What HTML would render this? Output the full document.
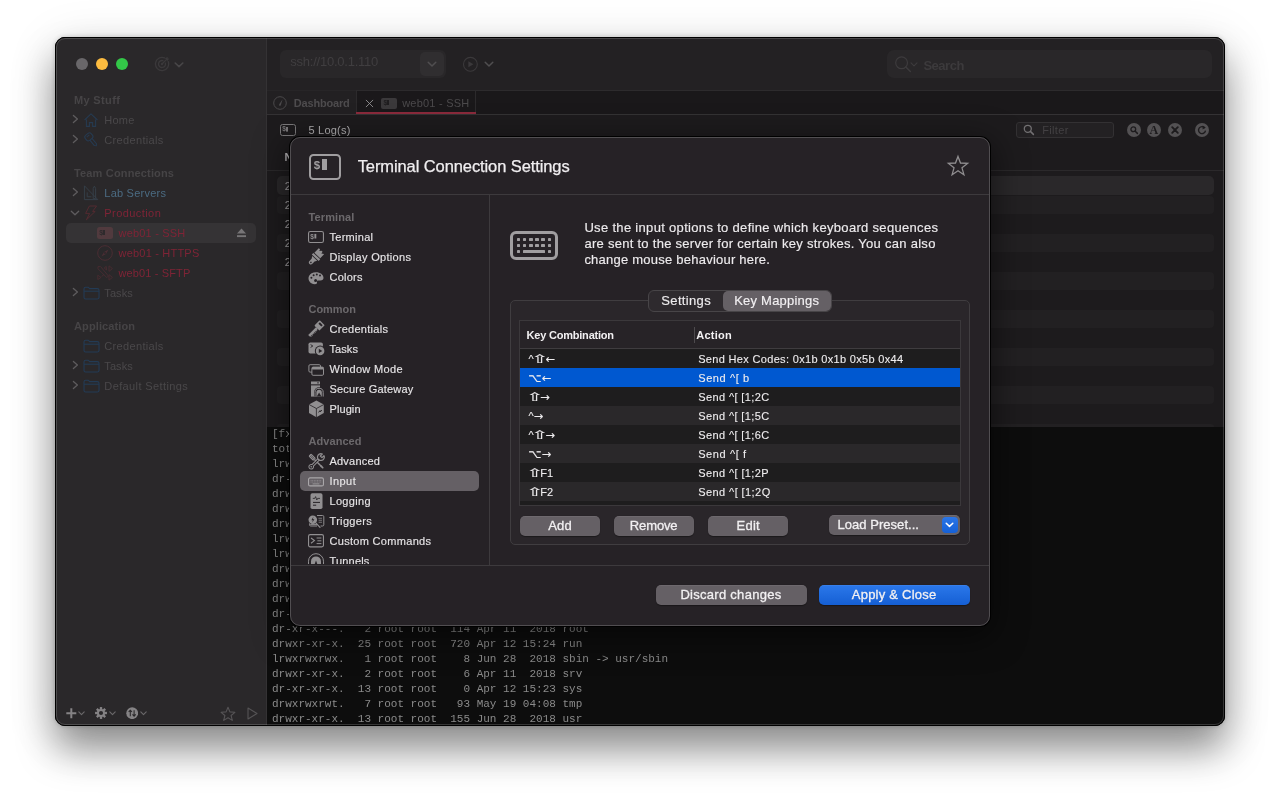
<!DOCTYPE html>
<html lang="en">
<head>
<meta charset="utf-8">
<title>Terminal Connection Settings</title>
<style>
html,body{margin:0;padding:0;}
body{width:1280px;height:800px;background:#fff;position:relative;overflow:hidden;font-family:"Liberation Sans",sans-serif;-webkit-font-smoothing:antialiased;}
.abs{position:absolute;}
#shadow{position:absolute;left:55px;top:37px;width:1170px;height:689px;border-radius:11px;box-shadow:0 24px 38px 0 rgba(0,0,0,.40),0 0 5px rgba(0,0,0,.2),0 8px 50px rgba(0,0,0,.13);background:#000;}
#win{will-change:transform;position:absolute;left:0;top:0;width:1280px;height:800px;clip-path:inset(37px 55px 74px 55px round 10px);background:#000;}
#edge{position:absolute;left:55px;top:37px;width:1168px;height:687px;border:1px solid #000;border-radius:10px;pointer-events:none;}
#edge2{position:absolute;left:56px;top:38px;width:1166px;height:685px;border:1px solid rgba(255,255,255,.17);border-radius:9px;pointer-events:none;}
.t{position:absolute;white-space:nowrap;line-height:1;}
/* main sidebar */
#sb{left:56px;top:38px;width:211px;height:688px;background:#2a282a;}
.sh{font-size:11px;font-weight:bold;color:#464446;letter-spacing:.1px;}
.si{font-size:12px;color:#474547;letter-spacing:.15px;}
.red{color:#7b2533;}
.blu{color:#4b6b84;}
/* dialog */
#dlg{left:290px;top:137px;width:700px;height:489px;border-radius:10px;background:#252125;box-shadow:0 0 0 1px #000,0 8px 32px 3px rgba(0,0,0,.5);}
#dlgedge{left:290px;top:137px;width:698px;height:487px;border-radius:10px;border:1px solid rgba(255,255,255,.2);pointer-events:none;}
.dh{font-size:11px;font-weight:bold;color:#6d696d;letter-spacing:.1px;}
.di{font-size:12px;color:#e9e7e9;letter-spacing:.1px;}
.btn{position:absolute;height:20px;border-radius:5px;background:#656065;color:#f2f0f2;font-size:13px;text-align:center;line-height:20px;box-shadow:0 0.5px 1px rgba(0,0,0,.4);}
.row{position:absolute;left:520px;width:440px;height:19px;}
.rt{position:absolute;font-size:11px;color:#f0eef0;white-space:nowrap;line-height:1;letter-spacing:.2px;}
.term{position:absolute;left:272px;font-family:"Liberation Mono","DejaVu Sans Mono",monospace;font-size:11px;color:#8b8b8b;white-space:pre;line-height:15px;}
.sym{font-family:"DejaVu Sans",sans-serif;font-size:11.5px;line-height:0;}
.shf{display:inline-block;transform:scaleX(1.8);line-height:1;margin:0 1px;}
</style>
</head>
<body>
<div id="shadow"></div>
<div id="win">
<div class="abs" style="left:56px;top:38px;width:210px;height:688px;background:#2a282a;"></div>
<div class="abs" style="left:266px;top:38px;width:1px;height:688px;background:#343234;"></div>
<div class="abs" style="left:267px;top:38px;width:958px;height:52px;background:#232123;"></div>
<div class="abs" style="left:267px;top:90px;width:958px;height:24px;background:#1a181a;"></div>
<div class="abs" style="left:267px;top:90px;width:958px;height:1px;background:#2d2b2d;"></div>
<div class="abs" style="left:267px;top:114px;width:958px;height:1px;background:#343234;"></div>
<div class="abs" style="left:267px;top:115px;width:958px;height:312px;background:#1d1b1d;"></div>
<div class="abs" style="left:267px;top:170px;width:958px;height:1px;background:#2b292b;"></div>
<div class="abs" style="left:267px;top:427px;width:958px;height:299px;background:#0d0d0d;"></div>

<!-- p10_sidebar -->
<div class="abs" style="left:76px;top:58px;width:12px;height:12px;background:#69676a;border-radius:50%;"></div>
<div class="abs" style="left:96px;top:58px;width:12px;height:12px;background:#fdbc40;border-radius:50%;"></div>
<div class="abs" style="left:116px;top:58px;width:12px;height:12px;background:#33c748;border-radius:50%;"></div>
<svg class="abs" style="left:154px;top:56px;" width="16" height="16" viewBox="0 0 16 16" fill="none"><path d="M10.6 1.9 A6.6 6.6 0 1 0 14.2 5.6" stroke="#3b393b" stroke-width="1.3" stroke-linecap="round"/><path d="M8.9 4.6 A3.5 3.5 0 1 0 11.4 7.1" stroke="#3b393b" stroke-width="1.3" stroke-linecap="round"/><circle cx="8" cy="8" r="1.2" fill="#3b393b"/><path d="M8 8 L12.4 3.6" stroke="#3b393b" stroke-width="1.3"/><path d="M11 2.6 L13.6 0.8 L13.7 2.4 L15.2 2.5 L13.4 5 Z" fill="#3b393b"/></svg>
<svg class="abs" style="left:174px;top:61.6px;" width="10" height="6.5" viewBox="0 0 10 6.5" fill="none"><path d="M1.2 1 L5 4.6 L8.8 1" stroke="#484648" stroke-width="1.6" stroke-linecap="round" stroke-linejoin="round"/></svg>
<div class="t" style="left:74px;top:94.5px;font-size:11px;color:#464446;font-weight:bold;letter-spacing:0.345px;">My Stuff</div>
<svg class="abs" style="left:72px;top:114.3px;" width="7" height="10" viewBox="0 0 7 10" fill="none"><path d="M1.4 1.5 L5.4 5 L1.4 8.5" stroke="#5e5c5e" stroke-width="1.3" stroke-linecap="round" stroke-linejoin="round"/></svg>
<svg class="abs" style="left:83px;top:112px;" width="16" height="16" viewBox="0 0 16 16" fill="none"><path d="M1.6 8 L8 1.8 L14.4 8" stroke="#263a50" stroke-width="1.1" stroke-linejoin="round"/><path d="M3.4 7.4 V14.4 H6.4 V10.6 H9.6 V14.4 H12.6 V7.4" stroke="#263a50" stroke-width="1.1"/></svg>
<div class="t" style="left:104.3px;top:114.5px;font-size:11px;color:#4a484a;letter-spacing:0.219px;">Home</div>
<svg class="abs" style="left:72px;top:134.3px;" width="7" height="10" viewBox="0 0 7 10" fill="none"><path d="M1.4 1.5 L5.4 5 L1.4 8.5" stroke="#5e5c5e" stroke-width="1.3" stroke-linecap="round" stroke-linejoin="round"/></svg>
<svg class="abs" style="left:83px;top:131px;" width="16" height="16" viewBox="0 0 16 16" fill="none"><g transform="rotate(-40 6 6)"><rect x="2.2" y="2.6" width="7.6" height="6.4" rx="2.2" stroke="#263a50" stroke-width="1.1"/><path d="M4.2 4.6 H7.6" stroke="#263a50" stroke-width="1"/><path d="M4.6 9 V16 L6 17.4 L7.4 16 V9" stroke="#263a50" stroke-width="1.1" stroke-linejoin="round"/></g></svg>
<div class="t" style="left:104.3px;top:134.5px;font-size:11px;color:#4a484a;letter-spacing:0.336px;">Credentials</div>
<div class="t" style="left:74px;top:167.5px;font-size:11px;color:#464446;font-weight:bold;letter-spacing:0.160px;">Team Connections</div>
<svg class="abs" style="left:72px;top:187.3px;" width="7" height="10" viewBox="0 0 7 10" fill="none"><path d="M1.4 1.5 L5.4 5 L1.4 8.5" stroke="#5e5c5e" stroke-width="1.3" stroke-linecap="round" stroke-linejoin="round"/></svg>
<svg class="abs" style="left:83px;top:185px;" width="16" height="16" viewBox="0 0 16 16" fill="none"><path d="M1.4 0.8 V14.6 H14.8 Z" stroke="#353f48" stroke-width="1"/><path d="M4.2 7.4 V11.8 H8.4" stroke="#353f48" stroke-width="1"/><path d="M10.2 3.4 L11.4 1.2 L12.6 3.4 V13.6 H10.2 Z" stroke="#353f48" stroke-width="1"/></svg>
<div class="t" style="left:104.3px;top:187.5px;font-size:11px;color:#4b6b82;letter-spacing:0.229px;">Lab Servers</div>
<svg class="abs" style="left:70px;top:210.3px;" width="10" height="6" viewBox="0 0 10 6" fill="none"><path d="M1.3 1.2 L5 4.8 L8.7 1.2" stroke="#5e5c5e" stroke-width="1.3" stroke-linecap="round" stroke-linejoin="round"/></svg>
<svg class="abs" style="left:84px;top:205px;" width="14" height="16" viewBox="0 0 14 16" fill="none"><path d="M5.4 1 H12.6 L8.6 6.4 H11.2 L2.4 14.8 L5.6 8.4 H1.6 Z" stroke="#532a30" stroke-width="1" stroke-linejoin="round"/></svg>
<div class="t" style="left:104.3px;top:207.5px;font-size:11px;color:#7f2436;letter-spacing:0.434px;">Production</div>
<div class="abs" style="left:66px;top:223px;width:190px;height:20px;background:#353335;border-radius:5px;"></div>
<div class="abs" style="left:97px;top:227px;width:16px;height:12px;background:#513a3e;border-radius:2.5px;"></div>
<div class="t" style="left:99.3px;top:229.3px;font-size:7px;font-weight:bold;color:#2e2a2c;letter-spacing:-.2px;">$</div><div class="abs" style="left:103.3px;top:229.5px;width:2.2px;height:5.5px;background:#2e2a2c;"></div>
<div class="t" style="left:118.5px;top:227.5px;font-size:11px;color:#7f2436;letter-spacing:0.194px;">web01 - SSH</div>
<svg class="abs" style="left:236px;top:228px;" width="11" height="10" viewBox="0 0 11 10" fill="none"><path d="M5.5 0.6 L10 5.6 H1 Z" fill="#777577"/><rect x="1" y="7.2" width="9" height="1.9" fill="#777577"/></svg>
<svg class="abs" style="left:97px;top:245px;" width="16" height="16" viewBox="0 0 16 16" fill="none"><circle cx="8" cy="8" r="7.3" stroke="#4a2d33" stroke-width="1"/><path d="M11.6 4.4 L9 9 L4.4 11.6 L7 7 Z" fill="#4a2d33"/><circle cx="8" cy="8" r="0.9" fill="#2a282a"/></svg>
<div class="t" style="left:118.5px;top:247.5px;font-size:11px;color:#7f2436;letter-spacing:0.208px;">web01 - HTTPS</div>
<svg class="abs" style="left:97px;top:265px;" width="16" height="16" viewBox="0 0 16 16" fill="none"><path d="M1 1.6 L3.6 1.6 L11.4 11 L9.8 12.6 L1 3.8 Z" stroke="#4a2b31" stroke-width="0.9" stroke-linejoin="round"/><path d="M9.2 1.4 L7.2 3 L9.6 5 Z" stroke="#4a2b31" stroke-width="0.9" stroke-linejoin="round"/><path d="M12 0.8 L15.4 3.6 L12 6.4 Z" stroke="#4a2b31" stroke-width="0.9" stroke-linejoin="round"/><path d="M12 9.6 L15.4 12.4 L12 15.2 Z" stroke="#4a2b31" stroke-width="0.9" stroke-linejoin="round"/><path d="M0.8 10.2 L4 12.4 L0.8 14.6 Z" stroke="#4a2b31" stroke-width="0.9" stroke-linejoin="round"/><path d="M4.6 11.6 L7 9.4" stroke="#4a2b31" stroke-width="0.9"/></svg>
<div class="t" style="left:118.5px;top:267.5px;font-size:11px;color:#7f2436;letter-spacing:0.131px;">web01 - SFTP</div>
<svg class="abs" style="left:72px;top:287.3px;" width="7" height="10" viewBox="0 0 7 10" fill="none"><path d="M1.4 1.5 L5.4 5 L1.4 8.5" stroke="#5e5c5e" stroke-width="1.3" stroke-linecap="round" stroke-linejoin="round"/></svg>
<svg class="abs" style="left:82.6px;top:286px;" width="17" height="14" viewBox="0 0 17 14" fill="none"><path d="M1 3 Q1 1.2 2.6 1.2 H5.2 L6.6 2.6 H14.4 Q16 2.6 16 4.2 V11.4 Q16 13 14.4 13 H2.6 Q1 13 1 11.4 Z" stroke="#233b55" stroke-width="1.1"/><path d="M1 5.2 H16" stroke="#233b55" stroke-width="1.1"/></svg>
<div class="t" style="left:104.3px;top:287.5px;font-size:11px;color:#4a484a;letter-spacing:0.095px;">Tasks</div>
<div class="t" style="left:74px;top:320.5px;font-size:11px;color:#464446;font-weight:bold;letter-spacing:0.111px;">Application</div>
<svg class="abs" style="left:82.6px;top:339px;" width="17" height="14" viewBox="0 0 17 14" fill="none"><path d="M1 3 Q1 1.2 2.6 1.2 H5.2 L6.6 2.6 H14.4 Q16 2.6 16 4.2 V11.4 Q16 13 14.4 13 H2.6 Q1 13 1 11.4 Z" stroke="#233b55" stroke-width="1.1"/><path d="M1 5.2 H16" stroke="#233b55" stroke-width="1.1"/></svg>
<div class="t" style="left:104.3px;top:340.5px;font-size:11px;color:#4a484a;letter-spacing:0.336px;">Credentials</div>
<svg class="abs" style="left:72px;top:360.3px;" width="7" height="10" viewBox="0 0 7 10" fill="none"><path d="M1.4 1.5 L5.4 5 L1.4 8.5" stroke="#5e5c5e" stroke-width="1.3" stroke-linecap="round" stroke-linejoin="round"/></svg>
<svg class="abs" style="left:82.6px;top:359px;" width="17" height="14" viewBox="0 0 17 14" fill="none"><path d="M1 3 Q1 1.2 2.6 1.2 H5.2 L6.6 2.6 H14.4 Q16 2.6 16 4.2 V11.4 Q16 13 14.4 13 H2.6 Q1 13 1 11.4 Z" stroke="#233b55" stroke-width="1.1"/><path d="M1 5.2 H16" stroke="#233b55" stroke-width="1.1"/></svg>
<div class="t" style="left:104.3px;top:360.5px;font-size:11px;color:#4a484a;letter-spacing:0.095px;">Tasks</div>
<svg class="abs" style="left:72px;top:380.3px;" width="7" height="10" viewBox="0 0 7 10" fill="none"><path d="M1.4 1.5 L5.4 5 L1.4 8.5" stroke="#5e5c5e" stroke-width="1.3" stroke-linecap="round" stroke-linejoin="round"/></svg>
<svg class="abs" style="left:82.6px;top:379px;" width="17" height="14" viewBox="0 0 17 14" fill="none"><path d="M1 3 Q1 1.2 2.6 1.2 H5.2 L6.6 2.6 H14.4 Q16 2.6 16 4.2 V11.4 Q16 13 14.4 13 H2.6 Q1 13 1 11.4 Z" stroke="#233b55" stroke-width="1.1"/><path d="M1 5.2 H16" stroke="#233b55" stroke-width="1.1"/></svg>
<div class="t" style="left:104.3px;top:380.5px;font-size:11px;color:#4a484a;letter-spacing:0.389px;">Default Settings</div>
<svg class="abs" style="left:66px;top:707.7px;" width="11" height="11" viewBox="0 0 11 11" fill="none"><path d="M5.3 0.3 V10.3 M0.3 5.3 H10.3" stroke="#858385" stroke-width="2"/></svg>
<svg class="abs" style="left:78px;top:711.3px;" width="7" height="5" viewBox="0 0 7 5" fill="none"><path d="M0.8 0.8 L3.5 3.6 L6.2 0.8" stroke="#6a686a" stroke-width="1.1" stroke-linecap="round" stroke-linejoin="round"/></svg>
<svg class="abs" style="left:94px;top:706.2px;" width="14" height="14" viewBox="0 0 14 14" fill="none"><g transform="translate(7 7) scale(.9)"><circle r="3.4" stroke="#858385" stroke-width="2.2"/><rect x="-1.3" y="-6.6" width="2.6" height="3" fill="#858385" transform="rotate(0)"/><rect x="-1.3" y="-6.6" width="2.6" height="3" fill="#858385" transform="rotate(45)"/><rect x="-1.3" y="-6.6" width="2.6" height="3" fill="#858385" transform="rotate(90)"/><rect x="-1.3" y="-6.6" width="2.6" height="3" fill="#858385" transform="rotate(135)"/><rect x="-1.3" y="-6.6" width="2.6" height="3" fill="#858385" transform="rotate(180)"/><rect x="-1.3" y="-6.6" width="2.6" height="3" fill="#858385" transform="rotate(225)"/><rect x="-1.3" y="-6.6" width="2.6" height="3" fill="#858385" transform="rotate(270)"/><rect x="-1.3" y="-6.6" width="2.6" height="3" fill="#858385" transform="rotate(315)"/></g></svg>
<svg class="abs" style="left:109.3px;top:711.3px;" width="7" height="5" viewBox="0 0 7 5" fill="none"><path d="M0.8 0.8 L3.5 3.6 L6.2 0.8" stroke="#6a686a" stroke-width="1.1" stroke-linecap="round" stroke-linejoin="round"/></svg>
<svg class="abs" style="left:125.6px;top:706.6px;" width="12.4" height="12.4" viewBox="0 0 13 13" fill="none"><circle cx="6.5" cy="6.5" r="6.2" fill="#858385"/><path d="M4.5 9.6 V3.6 M2.8 5.2 L4.5 3.4 L6.2 5.2 M8.5 3.4 V9.4 M6.8 7.8 L8.5 9.6 L10.2 7.8" stroke="#2a282a" stroke-width="1.1" fill="none"/></svg>
<svg class="abs" style="left:140.2px;top:711.3px;" width="7" height="5" viewBox="0 0 7 5" fill="none"><path d="M0.8 0.8 L3.5 3.6 L6.2 0.8" stroke="#6a686a" stroke-width="1.1" stroke-linecap="round" stroke-linejoin="round"/></svg>
<svg class="abs" style="left:220px;top:705.5px;" width="16" height="16" viewBox="0 0 16 16" fill="none"><path d="M8 1.2 L9.9 5.9 L14.9 6.3 L11.1 9.5 L12.3 14.4 L8 11.7 L3.7 14.4 L4.9 9.5 L1.1 6.3 L6.1 5.9 Z" stroke="#555355" stroke-width="1.1" stroke-linejoin="round"/></svg>
<svg class="abs" style="left:247px;top:707px;" width="11" height="13" viewBox="0 0 11 13" fill="none"><path d="M1 1 L10 6.5 L1 12 Z" stroke="#555355" stroke-width="1.1" stroke-linejoin="round"/></svg>
<!-- p20_toolbar -->
<div class="abs" style="left:280px;top:50px;width:166px;height:28px;background:#292729;border-radius:6px;"></div>
<div class="t" style="left:290.3px;top:54.5px;font-size:13px;color:#403e40;letter-spacing:-0.237px;">ssh://10.0.1.110</div>
<div class="abs" style="left:420px;top:52px;width:23.5px;height:23.5px;background:#302e30;border-radius:5px;"></div>
<svg class="abs" style="left:427px;top:61px;" width="10" height="7" viewBox="0 0 10 7" fill="none"><path d="M1.2 1.2 L5 5 L8.8 1.2" stroke="#504e50" stroke-width="1.5" stroke-linecap="round" stroke-linejoin="round"/></svg>
<svg class="abs" style="left:462px;top:55.5px;" width="17" height="17" viewBox="0 0 17 17" fill="none"><circle cx="8.4" cy="8.3" r="6.9" stroke="#3b393b" stroke-width="1.1"/><path d="M6.4 5.3 L11.4 8.3 L6.4 11.3 Z" fill="#3b393b"/></svg>
<svg class="abs" style="left:484px;top:61px;" width="10" height="7" viewBox="0 0 10 7" fill="none"><path d="M1.2 1.2 L5 5 L8.8 1.2" stroke="#504e50" stroke-width="1.5" stroke-linecap="round" stroke-linejoin="round"/></svg>
<div class="abs" style="left:887px;top:50px;width:325px;height:28px;background:#292729;border-radius:7px;"></div>
<svg class="abs" style="left:894px;top:55px;" width="26" height="18" viewBox="0 0 26 18" fill="none"><circle cx="7.6" cy="7.8" r="5.9" stroke="#3d3b3d" stroke-width="1.2"/><path d="M11.8 12 L16.4 16.6" stroke="#3d3b3d" stroke-width="1.4" stroke-linecap="round"/><path d="M17 7.8 L20 10.8 L23 7.8" stroke="#3d3b3d" stroke-width="1.1" stroke-linecap="round" stroke-linejoin="round"/></svg>
<div class="t" style="left:923.4px;top:58.8px;font-size:13px;color:#3c3a3c;font-weight:bold;letter-spacing:-0.473px;">Search</div>
<div class="abs" style="left:267px;top:90px;width:89px;height:24px;background:#222022;border-top:1px solid #272527;box-sizing:border-box;"></div>
<svg class="abs" style="left:273px;top:96px;" width="14" height="14" viewBox="0 0 14 14" fill="none"><circle cx="7" cy="7" r="6.3" stroke="#4b494b" stroke-width="1"/><path d="M9.6 3.2 L6.2 8.2 Q5.6 9.4 6.6 9.8 Q7.6 10 7.9 8.9 Z" fill="#4b494b"/></svg>
<div class="t" style="left:293.8px;top:97.7px;font-size:11px;color:#4e4c4e;font-weight:bold;letter-spacing:-0.195px;">Dashboard</div>
<div class="abs" style="left:356px;top:90px;width:120px;height:24px;background:#1a181a;border:1px solid #2c2a2c;border-bottom:none;box-sizing:border-box;"></div>
<div class="abs" style="left:356px;top:112.3px;width:120px;height:2.1px;background:#8a2a3b;"></div>
<svg class="abs" style="left:365px;top:99px;" width="9" height="9" viewBox="0 0 9 9" fill="none"><path d="M1.2 1.2 L7.8 7.8 M7.8 1.2 L1.2 7.8" stroke="#9a989a" stroke-width="0.85" stroke-linecap="round"/></svg>
<div class="abs" style="left:381px;top:97.5px;width:16px;height:11px;background:#3b393b;border-radius:2px;"></div>
<div class="t" style="left:383.4px;top:99.3px;font-size:7px;font-weight:bold;color:#1f1d1f;letter-spacing:-.2px;">$</div><div class="abs" style="left:387.2px;top:99.6px;width:2.2px;height:5.2px;background:#1f1d1f;"></div>
<div class="t" style="left:402.2px;top:97.7px;font-size:11px;color:#4c4a4c;letter-spacing:0.219px;">web01 - SSH</div>
<svg class="abs" style="left:280px;top:123.5px;" width="16" height="12" viewBox="0 0 16 12" fill="none"><rect x="0.5" y="0.5" width="15" height="11" rx="2" stroke="#7a787a" stroke-width="1"/><rect x="6" y="3" width="2" height="4.6" fill="#7a787a"/></svg>
<div class="t" style="left:282.3px;top:126.4px;font-size:6.5px;font-weight:bold;color:#7a787a;">$</div><div class="t" style="left:308.4px;top:124.7px;font-size:11px;color:#b2b0b2;letter-spacing:0.235px;">5 Log(s)</div>
<div class="abs" style="left:1016px;top:122px;width:98px;height:16px;background:#232123;border:1px solid #333133;box-sizing:border-box;border-radius:3px;"></div>
<svg class="abs" style="left:1023px;top:124px;" width="12" height="12" viewBox="0 0 12 12" fill="none"><circle cx="4.8" cy="4.8" r="3.5" stroke="#727072" stroke-width="1.3"/><path d="M7.4 7.4 L10.4 10.4" stroke="#727072" stroke-width="1.5" stroke-linecap="round"/></svg>
<div class="t" style="left:1042.3px;top:124.5px;font-size:11px;color:#434143;letter-spacing:0.311px;">Filter</div>
<div class="abs" style="left:1126.7px;top:123px;width:14px;height:14px;background:#535153;border-radius:50%;"></div>
<div class="abs" style="left:1147px;top:123px;width:14px;height:14px;background:#535153;border-radius:50%;"></div>
<div class="abs" style="left:1168px;top:123px;width:14px;height:14px;background:#535153;border-radius:50%;"></div>
<div class="abs" style="left:1195px;top:123px;width:14px;height:14px;background:#535153;border-radius:50%;"></div>
<svg class="abs" style="left:1126.7px;top:123px;" width="14" height="14" viewBox="0 0 14 14" fill="none"><circle cx="6.3" cy="6.3" r="2.4" stroke="#1d1b1d" stroke-width="1.3"/><path d="M8.2 8.2 L10.4 10.4" stroke="#1d1b1d" stroke-width="1.5" stroke-linecap="round"/></svg>
<div class="t" style="left:1149.6px;top:124px;font-size:12px;font-weight:bold;color:#1d1b1d;font-family:'Liberation Serif',serif;">A</div><svg class="abs" style="left:1168px;top:123px;" width="14" height="14" viewBox="0 0 14 14" fill="none"><path d="M4.2 4.2 L9.8 9.8 M9.8 4.2 L4.2 9.8" stroke="#1d1b1d" stroke-width="1.9" stroke-linecap="round"/></svg>
<svg class="abs" style="left:1195px;top:123px;" width="14" height="14" viewBox="0 0 14 14" fill="none"><path d="M9.9 5.1 A3.5 3.5 0 1 0 10.5 7.6" stroke="#1d1b1d" stroke-width="1.4"/><path d="M7.6 2.4 L10.6 4.6 L7.6 6.6 Z" fill="#1d1b1d"/></svg>
<div class="t" style="left:284.6px;top:151.8px;font-size:11px;color:#b3b1b3;font-weight:bold;">N</div>
<div class="abs" style="left:277px;top:176px;width:937px;height:19px;background:#2a282a;border-radius:5px;"></div>
<div class="abs" style="left:277px;top:196px;width:937px;height:18px;background:#222022;border-radius:4px;"></div>
<div class="abs" style="left:277px;top:234px;width:937px;height:18px;background:#222022;border-radius:4px;"></div>
<div class="abs" style="left:277px;top:272px;width:937px;height:18px;background:#222022;border-radius:4px;"></div>
<div class="abs" style="left:277px;top:310px;width:937px;height:18px;background:#222022;border-radius:4px;"></div>
<div class="abs" style="left:277px;top:348px;width:937px;height:18px;background:#222022;border-radius:4px;"></div>
<div class="abs" style="left:277px;top:386px;width:937px;height:18px;background:#222022;border-radius:4px;"></div>
<div class="abs" style="left:277px;top:424px;width:937px;height:3px;background:#222022;border-radius:4px 4px 0 0;"></div>
<div class="t" style="left:284.8px;top:181.3px;font-size:11px;color:#a5a3a5;">2</div>
<div class="t" style="left:284.8px;top:200.3px;font-size:11px;color:#a5a3a5;">2</div>
<div class="t" style="left:284.8px;top:219.3px;font-size:11px;color:#a5a3a5;">2</div>
<div class="t" style="left:284.8px;top:238.3px;font-size:11px;color:#a5a3a5;">2</div>
<div class="t" style="left:284.8px;top:257.3px;font-size:11px;color:#a5a3a5;">2</div>
<!-- p30_term -->
<div class="term" style="top:427px;">[fxadmin@web01 /]$ ls -l
total 16
lrwxrwxrwx.   1 root root    7 Jun 28  2018 bin -&gt; usr/bin
dr-xr-xr-x.   5 root root 4096 Jun 28  2018 boot
drwxr-xr-x.  20 root root 3160 Apr 12 15:23 dev
drwxr-xr-x.  80 root root 8192 Apr 12 15:24 etc
drwxr-xr-x.   3 root root   21 Jun 28  2018 home
lrwxrwxrwx.   1 root root    7 Jun 28  2018 lib -&gt; usr/lib
lrwxrwxrwx.   1 root root    9 Jun 28  2018 lib64 -&gt; usr/lib64
drwxr-xr-x.   2 root root    6 Apr 11  2018 media
drwxr-xr-x.   2 root root    6 Apr 11  2018 mnt
drwxr-xr-x.   2 root root    6 Apr 11  2018 opt
dr-xr-xr-x. 101 root root    0 Apr 12 15:23 proc
dr-xr-x---.   2 root root  114 Apr 11  2018 root
drwxr-xr-x.  25 root root  720 Apr 12 15:24 run
lrwxrwxrwx.   1 root root    8 Jun 28  2018 sbin -&gt; usr/sbin
drwxr-xr-x.   2 root root    6 Apr 11  2018 srv
dr-xr-xr-x.  13 root root    0 Apr 12 15:23 sys
drwxrwxrwt.   7 root root   93 May 19 04:08 tmp
drwxr-xr-x.  13 root root  155 Jun 28  2018 usr</div>
<!-- p40_dialog -->
<div class="abs" id="dlg" style="background:#262226"></div>
<div class="abs" style="left:291px;top:194px;width:698px;height:1px;background:#3d3a3d;"></div>
<div class="abs" style="left:489px;top:195px;width:1px;height:370px;background:#3d3a3d;"></div>
<div class="abs" style="left:291px;top:564.5px;width:698px;height:1px;background:#3d3a3d;"></div>
<div class="abs" style="left:309px;top:154px;width:32px;height:25.5px;background:transparent;border:2.3px solid #a09ea0;border-radius:4.5px;box-sizing:border-box;"></div>
<div class="t" style="left:313.8px;top:159.6px;font-size:11.5px;font-weight:bold;color:#a09ea0;">$</div><div class="abs" style="left:322.2px;top:159.4px;width:4.7px;height:10.6px;background:#a09ea0;"></div>
<div class="t" style="left:357.7px;top:157.65px;font-size:16.5px;color:#f0eef0;letter-spacing:-0.097px;-webkit-text-stroke:.25px #f0eef0;">Terminal Connection Settings</div>
<svg class="abs" style="left:946px;top:154px;" width="24" height="24" viewBox="0 0 24 24" fill="none"><path d="M12 2.4 L14.5 9 L21.6 9.4 L16 13.8 L17.9 20.7 L12 16.8 L6.1 20.7 L8 13.8 L2.4 9.4 L9.5 9 Z" stroke="#908e90" stroke-width="1.3" stroke-linejoin="miter"/></svg>
<div class="t" style="left:308.5px;top:212.1px;font-size:11px;color:#6c696c;font-weight:bold;letter-spacing:0.109px;">Terminal</div>
<div class="t" style="left:329.5px;top:231.5px;font-size:11px;color:#e6e4e6;letter-spacing:0.276px;-webkit-text-stroke:.15px #e6e4e6;">Terminal</div>
<div class="t" style="left:329.5px;top:251.5px;font-size:11px;color:#e6e4e6;letter-spacing:0.319px;-webkit-text-stroke:.15px #e6e4e6;">Display Options</div>
<div class="t" style="left:329.5px;top:271.5px;font-size:11px;color:#e6e4e6;letter-spacing:0.242px;-webkit-text-stroke:.15px #e6e4e6;">Colors</div>
<div class="t" style="left:308.5px;top:304.1px;font-size:11px;color:#6c696c;font-weight:bold;letter-spacing:-0.033px;">Common</div>
<div class="t" style="left:329.5px;top:323.5px;font-size:11px;color:#e6e4e6;letter-spacing:0.276px;-webkit-text-stroke:.15px #e6e4e6;">Credentials</div>
<div class="t" style="left:329.5px;top:343.5px;font-size:11px;color:#e6e4e6;letter-spacing:0.070px;-webkit-text-stroke:.15px #e6e4e6;">Tasks</div>
<div class="t" style="left:329.5px;top:363.5px;font-size:11px;color:#e6e4e6;letter-spacing:0.330px;-webkit-text-stroke:.15px #e6e4e6;">Window Mode</div>
<div class="t" style="left:329.5px;top:383.5px;font-size:11px;color:#e6e4e6;letter-spacing:0.183px;-webkit-text-stroke:.15px #e6e4e6;">Secure Gateway</div>
<div class="t" style="left:329.5px;top:403.5px;font-size:11px;color:#e6e4e6;letter-spacing:0.084px;-webkit-text-stroke:.15px #e6e4e6;">Plugin</div>
<div class="t" style="left:308.5px;top:436.1px;font-size:11px;color:#6c696c;font-weight:bold;letter-spacing:0.061px;">Advanced</div>
<div class="t" style="left:329.5px;top:455.5px;font-size:11px;color:#e6e4e6;letter-spacing:0.210px;-webkit-text-stroke:.15px #e6e4e6;">Advanced</div>
<div class="abs" style="left:300px;top:471px;width:179px;height:20px;background:#656065;border-radius:5px;"></div>
<div class="t" style="left:329.5px;top:475.5px;font-size:11px;color:#e6e4e6;letter-spacing:0.433px;-webkit-text-stroke:.15px #e6e4e6;">Input</div>
<div class="t" style="left:329.5px;top:495.5px;font-size:11px;color:#e6e4e6;letter-spacing:0.308px;-webkit-text-stroke:.15px #e6e4e6;">Logging</div>
<div class="t" style="left:329.5px;top:515.5px;font-size:11px;color:#e6e4e6;letter-spacing:0.323px;-webkit-text-stroke:.15px #e6e4e6;">Triggers</div>
<div class="t" style="left:329.5px;top:535.5px;font-size:11px;color:#e6e4e6;letter-spacing:0.307px;-webkit-text-stroke:.15px #e6e4e6;">Custom Commands</div>
<div class="abs" style="left:300px;top:548px;width:189px;height:16px;overflow:hidden;"><div class="t" style="left:29.5px;top:7.5px;font-size:11px;color:#e6e4e6;letter-spacing:0.179px;-webkit-text-stroke:.15px #e6e4e6;">Tunnels</div>
</div>
<!-- p45_dlgicons -->
<svg class="abs" style="left:308px;top:231px;" width="16" height="12" viewBox="0 0 16 12" fill="none"><rect x="0.55" y="0.55" width="14.9" height="10.9" rx="1.8" stroke="#918f91" stroke-width="1.1"/><rect x="6.4" y="2.9" width="1.9" height="4.6" fill="#918f91"/></svg>
<div class="t" style="left:310.3px;top:233.8px;font-size:6.5px;font-weight:bold;color:#918f91;">$</div><svg class="abs" style="left:307px;top:248px;" width="17" height="18" viewBox="0 0 17 18" fill="none"><g transform="translate(8.4 9.6) rotate(43)"><path d="M-4 -9.2 L-2.2 -9.2 L-1.6 -7.4 L-0.2 -9.2 L1.2 -9.2 L1.6 -7 L4 -8.6 L4 -2.8 L-4 -2.8 Z" fill="#918f91"/><rect x="-4.7" y="-2" width="9.4" height="2.2" fill="#918f91"/><path d="M-3.4 1 H3.4 L2 3.4 V6.6 A2 2 0 0 1 -2 6.6 V3.4 Z" fill="#918f91"/><circle cx="0" cy="6.6" r="0.8" fill="#262226"/></g></svg>
<svg class="abs" style="left:308px;top:270.5px;" width="16" height="14" viewBox="0 0 16 14" fill="none"><path d="M8 1.2 C3.6 1.2 0.5 4 0.5 7.3 C0.5 10.8 3.4 13.2 7 13.2 C8.6 13.2 9.2 12.4 9 11.4 C8.8 10.4 9.2 9.6 10.4 9.6 H12.4 C14.4 9.6 15.5 8.6 15.5 6.8 C15.5 3.6 12.2 1.2 8 1.2 Z" fill="#918f91"/><circle cx="3.4" cy="6.8" r="1" fill="#262226"/><circle cx="5.6" cy="4.2" r="1" fill="#262226"/><circle cx="8.8" cy="3.4" r="1" fill="#262226"/><circle cx="12" cy="4.6" r="1" fill="#262226"/><circle cx="7.6" cy="9.6" r="1.5" fill="#262226"/></svg>
<svg class="abs" style="left:307px;top:320px;" width="18" height="18" viewBox="0 0 18 18" fill="none"><g transform="translate(12 6) rotate(45)"><rect x="-3.6" y="-4.6" width="7.2" height="7.6" rx="0.8" fill="#918f91"/><rect x="-2" y="-3.2" width="4" height="2" fill="#262226"/><rect x="-1.3" y="3" width="2.6" height="11" fill="#918f91"/><path d="M1.3 5 h0.9 M1.3 7 h0.9 M1.3 9 h0.9 M1.3 11 h0.9 M1.3 13 h0.9" stroke="#918f91" stroke-width="1"/></g></svg>
<svg class="abs" style="left:307.5px;top:342px;" width="18" height="14" viewBox="0 0 18 14" fill="none"><rect x="0.5" y="0.4" width="14.4" height="11.2" rx="1.8" fill="#918f91"/><path d="M2.6 2.6 L4.8 4 L2.6 5.4" stroke="#262226" stroke-width="0.9"/><circle cx="12.1" cy="8.9" r="5.3" fill="#262226"/><circle cx="12.1" cy="8.9" r="4.3" fill="#918f91"/><path d="M10.8 6.8 L14.3 8.9 L10.8 11 Z" fill="#262226"/></svg>
<svg class="abs" style="left:308px;top:364px;" width="16" height="12" viewBox="0 0 16 12" fill="none"><rect x="0.9" y="0.7" width="11.6" height="7.4" rx="1.2" stroke="#918f91" stroke-width="1"/><rect x="3.9" y="3.1" width="11.6" height="8.2" rx="1.2" fill="#262226" stroke="#918f91" stroke-width="1"/><rect x="3.9" y="3.1" width="11.6" height="2.3" rx="1" fill="#918f91"/></svg>
<svg class="abs" style="left:308px;top:380.5px;" width="17" height="16" viewBox="0 0 17 16" fill="none"><rect x="3" y="0.5" width="9" height="2.8" fill="#918f91"/><rect x="9" y="1.5" width="2" height="0.8" fill="#262226"/><rect x="3" y="4.4" width="9" height="11.2" fill="#918f91"/><path d="M6 15.6 V11.4 A5 5 0 0 1 16.2 11.4 V15.6 Z" fill="#262226"/><path d="M7 15.6 V11.4 A4.1 4.1 0 0 1 15.2 11.4 V15.6" stroke="#918f91" stroke-width="1"/><path d="M11.1 8.8 A2.7 2.7 0 0 1 13.8 11.5 V15.6 H8.4 V11.5 A2.7 2.7 0 0 1 11.1 8.8 Z" fill="#918f91"/><path d="M11.1 11.4 L13.4 15.6 H8.8 Z" fill="#262226"/></svg>
<svg class="abs" style="left:308px;top:400px;" width="17" height="18" viewBox="0 0 17 18" fill="none"><path d="M8.4 0.6 L15.8 4.5 V13 L8.4 17.2 L1 13 V4.5 Z" fill="#918f91"/><path d="M1 4.5 L8.4 8.5 L15.8 4.5 M8.4 8.5 V17.2" stroke="#262226" stroke-width="0.8"/><path d="M10.6 12.4 L12 10.6 L12.4 11.8 L13.8 10" stroke="#262226" stroke-width="1"/></svg>
<svg class="abs" style="left:307.5px;top:452.5px;" width="17" height="17" viewBox="0 0 17 17" fill="none"><g transform="translate(8.5 8.5) rotate(-45)"><rect x="-1.9" y="-9.6" width="3.8" height="7" rx="1.2" fill="#918f91"/><path d="M-0.6 -8.4 V-3.6 M0.6 -8.4 V-3.6" stroke="#262226" stroke-width="0.5"/><rect x="-0.7" y="-2.6" width="1.4" height="9" fill="#918f91"/><path d="M-1.1 6 H1.1 L0.6 9.6 H-0.6 Z" fill="#918f91"/></g><g transform="translate(8.5 8.5) rotate(45)"><path d="M-1 -4 V5.4 A2.3 2.3 0 1 0 1 5.4 V-4" stroke="#918f91" stroke-width="1" fill="#262226"/><circle cx="0" cy="7.4" r="0.8" fill="#918f91"/><path d="M-1.2 -9.4 A3.4 3.4 0 1 0 1.2 -9.4 V-6.6 H-1.2 Z" stroke="#918f91" stroke-width="1.2" fill="#262226" stroke-linejoin="round"/></g></svg>
<svg class="abs" style="left:308px;top:476.5px;" width="16" height="10" viewBox="0 0 16 10" fill="none"><rect x="0.55" y="0.9" width="14.9" height="8" rx="1.5" stroke="#a9a6a9" stroke-width="1.1"/><path d="M2.6 3.4 H13.4 M2.6 5 H13.4" stroke="#8d898d" stroke-width="0.9" stroke-dasharray="1 0.6"/><path d="M4.6 6.9 H11.4" stroke="#9a979a" stroke-width="1"/></svg>
<svg class="abs" style="left:309.5px;top:493px;" width="13" height="16.5" viewBox="0 0 13 16.5" fill="none"><rect x="0.5" y="0.2" width="12" height="15.8" rx="1.8" fill="#918f91"/><path d="M2.8 5.4 H4.8 L5.6 3.6 L6.8 7 L7.6 5.4 H10" stroke="#262226" stroke-width="0.8" stroke-linejoin="round"/><path d="M3 9.4 H10 M3 12.2 H6.2" stroke="#262226" stroke-width="1"/></svg>
<svg class="abs" style="left:307.5px;top:513.5px;" width="17" height="15" viewBox="0 0 17 15" fill="none"><path d="M9 1.5 H14.6 Q15.8 1.5 15.8 2.7 V10.8 Q15.8 12 14.6 12 H12.6 M9 12 H2.7 Q1.5 12 1.5 10.8 V9.4" stroke="#918f91" stroke-width="1"/><path d="M2.2 10.6 H9" stroke="#918f91" stroke-width="1"/><path d="M10.4 4.2 H14 M10.6 6.2 H14 M10.6 8.2 H14" stroke="#777477" stroke-width="1.1"/><circle cx="4.8" cy="5.8" r="4.3" fill="#918f91"/><path d="M5.4 2.8 L3.4 6.2 H4.9 L4.2 8.8 L6.4 5.2 H4.9 Z" fill="#262226"/><path d="M7.8 8.8 L12 13.4" stroke="#918f91" stroke-width="1.2" stroke-linecap="round"/></svg>
<svg class="abs" style="left:308px;top:534px;" width="16" height="13.5" viewBox="0 0 16 13.5" fill="none"><rect x="0.55" y="0.65" width="14.9" height="12.2" rx="1.6" stroke="#918f91" stroke-width="1.1"/><path d="M3 4 L6.4 6.6 L3 9.2" stroke="#918f91" stroke-width="1.1"/><path d="M8.6 4 H13.4 M9.4 6.8 H13.4 M8.6 9.6 H13.4" stroke="#918f91" stroke-width="1"/></svg>
<div class="abs" style="left:307px;top:552px;width:18px;height:12px;overflow:hidden;"><svg class="abs" style="left:0px;top:0px;" width="18" height="20" viewBox="0 0 18 20" fill="none"><path d="M1.5 20 V9.2 A7.5 7.5 0 0 1 16.5 9.2 V20" stroke="#918f91" stroke-width="1"/><path d="M4 20 V9.4 A5 5 0 0 1 14 9.4 V20 Z" fill="#918f91"/><path d="M9 8.4 L11 14 H7 Z" fill="#262226"/></svg>
</div>
<!-- p50_content -->
<div class="abs" style="left:510px;top:231px;width:48px;height:29.3px;background:transparent;border:3.2px solid #a09ea0;border-radius:6px;box-sizing:border-box;"></div>
<div class="abs" style="left:516.95px;top:237.95px;width:3.3px;height:3.3px;background:#a09ea0;border-radius:.4px;"></div>
<div class="abs" style="left:523.15px;top:237.95px;width:3.3px;height:3.3px;background:#a09ea0;border-radius:.4px;"></div>
<div class="abs" style="left:529.25px;top:237.95px;width:3.3px;height:3.3px;background:#a09ea0;border-radius:.4px;"></div>
<div class="abs" style="left:535.35px;top:237.95px;width:3.3px;height:3.3px;background:#a09ea0;border-radius:.4px;"></div>
<div class="abs" style="left:541.45px;top:237.95px;width:3.3px;height:3.3px;background:#a09ea0;border-radius:.4px;"></div>
<div class="abs" style="left:547.65px;top:237.95px;width:3.3px;height:3.3px;background:#a09ea0;border-radius:.4px;"></div>
<div class="abs" style="left:516.95px;top:243.75px;width:3.3px;height:3.3px;background:#a09ea0;border-radius:.4px;"></div>
<div class="abs" style="left:523.15px;top:243.75px;width:3.3px;height:3.3px;background:#a09ea0;border-radius:.4px;"></div>
<div class="abs" style="left:529.25px;top:243.75px;width:3.3px;height:3.3px;background:#a09ea0;border-radius:.4px;"></div>
<div class="abs" style="left:535.35px;top:243.75px;width:3.3px;height:3.3px;background:#a09ea0;border-radius:.4px;"></div>
<div class="abs" style="left:541.45px;top:243.75px;width:3.3px;height:3.3px;background:#a09ea0;border-radius:.4px;"></div>
<div class="abs" style="left:547.65px;top:243.75px;width:3.3px;height:3.3px;background:#a09ea0;border-radius:.4px;"></div>
<div class="abs" style="left:516.95px;top:249.65px;width:3.3px;height:3.3px;background:#a09ea0;border-radius:.4px;"></div>
<div class="abs" style="left:547.65px;top:249.65px;width:3.3px;height:3.3px;background:#a09ea0;border-radius:.4px;"></div>
<div class="abs" style="left:523px;top:249.65px;width:22.2px;height:3.3px;background:#a09ea0;border-radius:.6px;"></div>
<div class="t" style="left:584.4px;top:220.7px;font-size:13px;color:#edebed;letter-spacing:0.319px;-webkit-text-stroke:.15px #edebed;">Use the input options to define which keyboard sequences</div>
<div class="t" style="left:584.4px;top:236.7px;font-size:13px;color:#edebed;letter-spacing:0.278px;-webkit-text-stroke:.15px #edebed;">are sent to the server for certain key strokes. You can also</div>
<div class="t" style="left:584.4px;top:252.7px;font-size:13px;color:#edebed;letter-spacing:0.232px;-webkit-text-stroke:.15px #edebed;">change mouse behaviour here.</div>
<div class="abs" style="left:510px;top:300px;width:460px;height:245px;background:#2a262a;border:1px solid #403d40;border-radius:5px;box-sizing:border-box;"></div>
<div class="abs" style="left:648px;top:290px;width:184px;height:22px;background:#2e2a2e;border:1px solid #484548;border-radius:6px;box-sizing:border-box;"></div>
<div class="abs" style="left:723px;top:291px;width:108px;height:20px;background:#656065;border-radius:5px;"></div>
<div class="t" style="left:661.3px;top:293.9px;font-size:13px;color:#edebed;letter-spacing:0.346px;-webkit-text-stroke:.15px #edebed;">Settings</div>
<div class="t" style="left:734.2px;top:293.9px;font-size:13px;color:#f4f2f4;letter-spacing:0.220px;-webkit-text-stroke:.15px #edebed;">Key Mappings</div>
<div class="abs" style="left:519px;top:320px;width:442px;height:186px;background:#272327;border:1px solid #3b383b;box-sizing:border-box;"></div>
<div class="abs" style="left:520px;top:348px;width:440px;height:1px;background:#3f3c3f;"></div>
<div class="abs" style="left:694px;top:327px;width:1px;height:16px;background:#4d4a4d;"></div>
<div class="t" style="left:526.5px;top:329.7px;font-size:11px;color:#f2f0f2;font-weight:bold;letter-spacing:-0.204px;">Key Combination</div>
<div class="t" style="left:696.3px;top:329.7px;font-size:11px;color:#f2f0f2;font-weight:bold;letter-spacing:0.256px;">Action</div>
<div class="abs" style="left:520px;top:349px;width:440px;height:19px;background:#1e1d1e;"></div>
<div class="t" style="left:528.6px;top:353.7px;font-size:11px;color:#efedef;-webkit-text-stroke:.1px #efedef;font-family:'Liberation Sans','DejaVu Sans',sans-serif;">^<span class="sym shf">⇧</span><span class="sym">←</span></div>
<div class="t" style="left:698.2px;top:353.8px;font-size:11px;color:#efedef;letter-spacing:0.327px;-webkit-text-stroke:.1px #efedef;font-family:'Liberation Sans','DejaVu Sans',sans-serif;">Send Hex Codes: 0x1b 0x1b 0x5b 0x44</div>
<div class="abs" style="left:520px;top:368px;width:440px;height:19px;background:#0058d0;"></div>
<div class="t" style="left:528.6px;top:372.7px;font-size:11px;color:#efedef;-webkit-text-stroke:.1px #efedef;font-family:'Liberation Sans','DejaVu Sans',sans-serif;"><span class="sym">⌥</span><span class="sym">←</span></div>
<div class="t" style="left:698.2px;top:372.8px;font-size:11px;color:#efedef;letter-spacing:0.607px;-webkit-text-stroke:.1px #efedef;font-family:'Liberation Sans','DejaVu Sans',sans-serif;">Send ^[ b</div>
<div class="abs" style="left:520px;top:387px;width:440px;height:19px;background:#1e1d1e;"></div>
<div class="t" style="left:528.6px;top:391.7px;font-size:11px;color:#efedef;-webkit-text-stroke:.1px #efedef;font-family:'Liberation Sans','DejaVu Sans',sans-serif;"><span class="sym shf">⇧</span><span class="sym">→</span></div>
<div class="t" style="left:698.2px;top:391.8px;font-size:11px;color:#efedef;letter-spacing:0.390px;-webkit-text-stroke:.1px #efedef;font-family:'Liberation Sans','DejaVu Sans',sans-serif;">Send ^[ [1;2C</div>
<div class="abs" style="left:520px;top:406px;width:440px;height:19px;background:#2a282a;"></div>
<div class="t" style="left:528.6px;top:410.7px;font-size:11px;color:#efedef;-webkit-text-stroke:.1px #efedef;font-family:'Liberation Sans','DejaVu Sans',sans-serif;">^<span class="sym">→</span></div>
<div class="t" style="left:698.2px;top:410.8px;font-size:11px;color:#efedef;letter-spacing:0.390px;-webkit-text-stroke:.1px #efedef;font-family:'Liberation Sans','DejaVu Sans',sans-serif;">Send ^[ [1;5C</div>
<div class="abs" style="left:520px;top:425px;width:440px;height:19px;background:#1e1d1e;"></div>
<div class="t" style="left:528.6px;top:429.7px;font-size:11px;color:#efedef;-webkit-text-stroke:.1px #efedef;font-family:'Liberation Sans','DejaVu Sans',sans-serif;">^<span class="sym shf">⇧</span><span class="sym">→</span></div>
<div class="t" style="left:698.2px;top:429.8px;font-size:11px;color:#efedef;letter-spacing:0.390px;-webkit-text-stroke:.1px #efedef;font-family:'Liberation Sans','DejaVu Sans',sans-serif;">Send ^[ [1;6C</div>
<div class="abs" style="left:520px;top:444px;width:440px;height:19px;background:#2a282a;"></div>
<div class="t" style="left:528.6px;top:448.7px;font-size:11px;color:#efedef;-webkit-text-stroke:.1px #efedef;font-family:'Liberation Sans','DejaVu Sans',sans-serif;"><span class="sym">⌥</span><span class="sym">→</span></div>
<div class="t" style="left:698.2px;top:448.8px;font-size:11px;color:#efedef;letter-spacing:0.590px;-webkit-text-stroke:.1px #efedef;font-family:'Liberation Sans','DejaVu Sans',sans-serif;">Send ^[ f</div>
<div class="abs" style="left:520px;top:463px;width:440px;height:19px;background:#1e1d1e;"></div>
<div class="t" style="left:528.6px;top:467.7px;font-size:11px;color:#efedef;-webkit-text-stroke:.1px #efedef;font-family:'Liberation Sans','DejaVu Sans',sans-serif;"><span class="sym shf">⇧</span>F1</div>
<div class="t" style="left:698.2px;top:467.8px;font-size:11px;color:#efedef;letter-spacing:0.399px;-webkit-text-stroke:.1px #efedef;font-family:'Liberation Sans','DejaVu Sans',sans-serif;">Send ^[ [1;2P</div>
<div class="abs" style="left:520px;top:482px;width:440px;height:19px;background:#2a282a;"></div>
<div class="t" style="left:528.6px;top:486.7px;font-size:11px;color:#efedef;-webkit-text-stroke:.1px #efedef;font-family:'Liberation Sans','DejaVu Sans',sans-serif;"><span class="sym shf">⇧</span>F2</div>
<div class="t" style="left:698.2px;top:486.8px;font-size:11px;color:#efedef;letter-spacing:0.423px;-webkit-text-stroke:.1px #efedef;font-family:'Liberation Sans','DejaVu Sans',sans-serif;">Send ^[ [1;2Q</div>
<div class="abs" style="left:520px;top:501px;width:440px;height:4px;background:#1e1d1e;"></div>
<div class="abs" style="left:520px;top:516px;width:80px;height:20px;background:#656065;border-radius:5px;box-shadow:0 .5px 1px rgba(0,0,0,.35), inset 0 .5px 0 rgba(255,255,255,.12);"></div>
<div class="t" style="left:548.2px;top:518.6px;font-size:13px;color:#f2f0f2;letter-spacing:0.184px;-webkit-text-stroke:.3px #f2f0f2;">Add</div>
<div class="abs" style="left:614px;top:516px;width:80px;height:20px;background:#656065;border-radius:5px;box-shadow:0 .5px 1px rgba(0,0,0,.35), inset 0 .5px 0 rgba(255,255,255,.12);"></div>
<div class="t" style="left:629.8px;top:518.6px;font-size:13px;color:#f2f0f2;letter-spacing:-0.122px;-webkit-text-stroke:.3px #f2f0f2;">Remove</div>
<div class="abs" style="left:708px;top:516px;width:80px;height:20px;background:#656065;border-radius:5px;box-shadow:0 .5px 1px rgba(0,0,0,.35), inset 0 .5px 0 rgba(255,255,255,.12);"></div>
<div class="t" style="left:736.6px;top:518.6px;font-size:13px;color:#f2f0f2;letter-spacing:0.233px;-webkit-text-stroke:.3px #f2f0f2;">Edit</div>
<div class="abs" style="left:829px;top:515px;width:131px;height:20px;background:#656065;border-radius:5px;box-shadow:0 .5px 1px rgba(0,0,0,.35), inset 0 .5px 0 rgba(255,255,255,.12);"></div>
<div class="t" style="left:837.4px;top:517.6px;font-size:13px;color:#f2f0f2;letter-spacing:0.050px;-webkit-text-stroke:.3px #f2f0f2;">Load Preset...</div>
<div class="abs" style="left:941.5px;top:517px;width:16.5px;height:16px;background:#1766da;border-radius:4px;background:linear-gradient(#2a75e6,#1560d6);"></div>
<svg class="abs" style="left:945.2px;top:522.2px;" width="9" height="6" viewBox="0 0 9 6" fill="none"><path d="M1.2 1.2 L4.5 4.4 L7.8 1.2" stroke="#fff" stroke-width="1.5" stroke-linecap="round" stroke-linejoin="round"/></svg>
<div class="abs" style="left:656px;top:585px;width:151px;height:20px;background:#656065;border-radius:5px;box-shadow:0 .5px 1px rgba(0,0,0,.35), inset 0 .5px 0 rgba(255,255,255,.12);"></div>
<div class="t" style="left:680.4px;top:587.6px;font-size:13px;color:#f2f0f2;letter-spacing:0.283px;-webkit-text-stroke:.3px #f2f0f2;">Discard changes</div>
<div class="abs" style="left:819px;top:585px;width:151px;height:20px;background:#1a69de;border-radius:5px;box-shadow:0 .5px 1px rgba(0,0,0,.35), inset 0 .5px 0 rgba(255,255,255,.12);background:linear-gradient(#2b78ea,#155fd4);"></div>
<div class="t" style="left:851.8px;top:587.6px;font-size:13px;color:#f2f0f2;letter-spacing:0.229px;-webkit-text-stroke:.3px #f2f0f2;">Apply &amp; Close</div>
<div class="abs" id="dlgedge"></div>
</div>
<div id="edge"></div>
<div id="edge2"></div>
</body>
</html>
